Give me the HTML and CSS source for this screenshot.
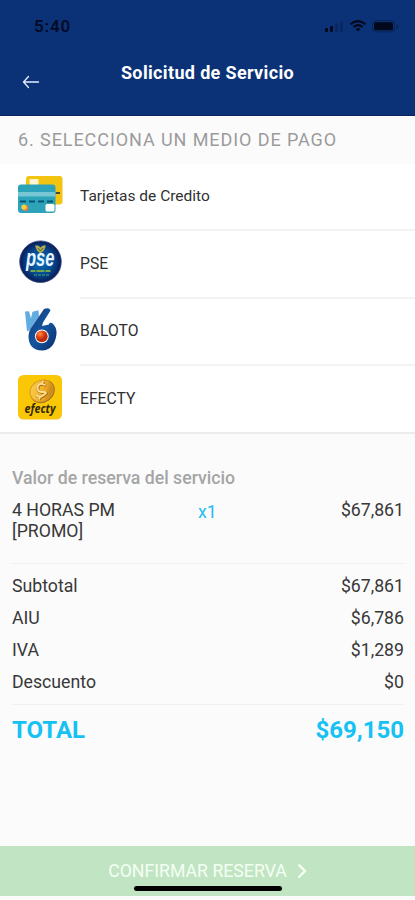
FILE: index.html
```html
<!DOCTYPE html>
<html lang="es">
<head>
<meta charset="utf-8">
<meta name="viewport" content="width=device-width, initial-scale=1">
<title>Solicitud de Servicio</title>
<link rel="stylesheet" href="styles.css">
</head>
<body>
<main class="screen">
  <header class="header">
    <div class="status">
      <span class="clock">5:40</span>
      <svg class="status-icons" width="76" height="16" viewBox="0 0 76 16">
        <rect x="1" y="8" width="3" height="4" rx="1"/>
        <rect x="6" y="6" width="3" height="6" rx="1"/>
        <g opacity=".22"><rect x="11" y="3" width="3" height="9" rx="1"/><rect x="16" y="1" width="3" height="11" rx="1"/></g>
        <g fill="none" stroke="#02081c" stroke-width="2"><path d="M26.500 4.200Q34 -2 41.500 4.200"/><path d="M29.300 7Q34 3.200 38.700 7"/></g>
        <path d="M31.500 9Q34 7 36.500 9L34 11.500z"/>
        <rect x="48.500" y=".8" width="22" height="11" rx="3" fill="none" stroke="#02081c" stroke-opacity=".35"/>
        <rect x="50" y="2.300" width="19" height="8" rx="1.500"/>
        <path d="M72.500 4v5q2-1 2-2.500t-2-2.500z" opacity=".35"/>
      </svg>
    </div>
    <div class="nav">
      <svg class="back" width="18" height="14" viewBox="0 0 18 14"><path d="M16.500 7H1.500M6.500 1.500L1.500 7L6.500 12.500"/></svg>
      <h1 class="title">Solicitud de Servicio</h1>
    </div>
  </header>
  <h2 class="step">6. SELECCIONA UN MEDIO DE PAGO</h2>
  <ul class="methods">
    <li class="method">
      <svg class="logo" width="46" height="46" viewBox="0 0 46 46">
        <rect x="8" y="4" width="36.500" height="28.500" rx="3" fill="#f2c311"/>
        <rect x="11.500" y="7" width="9" height="6" rx="1" fill="#fff6cf"/>
        <path d="M37 21h5" stroke="#4b4a35" stroke-width="2"/>
        <rect x="0" y="12.500" width="37.500" height="28.500" rx="3" fill="#2ca3b8"/>
        <path d="M0 20h37.500v4.500H0z" fill="#77c6d3"/>
        <path d="M2 29.500h6m3 0h6m3 0h6m3 0h6" stroke="#075575" stroke-width="2"/>
        <circle cx="7.500" cy="36" r="2.900" fill="#ed7650"/><circle cx="6" cy="35" r="2.600" fill="#f4d33a"/>
        <rect x="27.500" y="32" width="9" height="7.500" rx="1.500" fill="#fff"/>
      </svg>
      <div class="method-name n-card">Tarjetas de Credito</div>
    </li>
    <li class="method">
      <svg class="logo" width="46" height="46" viewBox="0 0 46 46">
        <defs><radialGradient id="pse"><stop offset="0" stop-color="#0870b8"/><stop offset=".6" stop-color="#064a92"/><stop offset="1" stop-color="#0a1b57"/></radialGradient></defs>
        <circle cx="22.500" cy="21.700" r="20.800" fill="url(#pse)" stroke="#39477d" stroke-width=".8"/>
        <path d="M17 5.500h3l2.500 2 2.500-2h3l-2 5-3.500 3-3.500-3z" fill="#b6aa4e"/><path d="M20 8l2.500 3L25 8" fill="none" stroke="#46672e"/>
        <text x="8" y="26" class="pse-text" textLength="28.500" lengthAdjust="spacingAndGlyphs">pse</text>
        <path d="M12.500 31h21" stroke="#73a64a" stroke-width="2" stroke-dasharray="5 1 8 1"/><path d="M16 35h15" stroke="#2c887d" stroke-width="1.500" stroke-dasharray="3 1"/>
      </svg>
      <div class="method-name">PSE</div>
    </li>
    <li class="method">
      <svg class="logo" width="46" height="46" viewBox="0 0 46 46">
        <defs><linearGradient id="six" x2="1" y2="1"><stop stop-color="#123a73"/><stop offset=".5" stop-color="#1555a0"/><stop offset="1" stop-color="#092f69"/></linearGradient><radialGradient id="ball" cx=".35" cy=".3"><stop stop-color="#ff9355"/><stop offset=".55" stop-color="#e94b14"/><stop offset="1" stop-color="#b92b0c"/></radialGradient></defs>
        <path d="M7 4.500l4-.3 2 7 1.500-6.500 6-1.500.5 6-9 14-3 1z" fill="#63ace0"/>
        <path d="M26 2q5.500-2 6.500 1.500L25 15.500l-1 3.500 7-1.500q0-2.500 3-1.500 5 4 4.500 11Q36.500 43 24 43.500 10.500 43 10.500 29q.5-6 4-10z" fill="url(#six)"/>
        <circle cx="23.800" cy="29.300" r="6.900" fill="#fff"/><circle cx="23.800" cy="29.300" r="5.900" fill="url(#ball)"/>
      </svg>
      <div class="method-name">BALOTO</div>
    </li>
    <li class="method">
      <svg class="logo" width="46" height="46" viewBox="0 0 46 46">
        <defs><linearGradient id="coin" x2="1" y2="1"><stop stop-color="#ffd75c"/><stop offset=".6" stop-color="#edaa22"/><stop offset="1" stop-color="#a56c16"/></linearGradient></defs>
        <rect x="0" y="0" width="44" height="44.500" rx="5.500" fill="#fac707"/>
        <ellipse cx="24.500" cy="16.500" rx="13" ry="11" transform="rotate(-35 24.500 16.500)" fill="#ad741c"/>
        <ellipse cx="23.500" cy="15.800" rx="12" ry="10.300" transform="rotate(-35 23.500 15.800)" fill="url(#coin)" stroke="#d99a25"/>
        <path d="M28 10.500Q21 7.500 20 12.500T25.500 17.500 23.500 22Q21 22.500 19 20.500M25.500 6.500l-1 3M22.500 22l-1 3" fill="none" stroke="#a96c15" stroke-width="3"/>
        <path d="M27.500 10Q20.500 7 19.500 12T25 17 23 21.500Q20.500 22 18.500 20M25 6l-1 3M22 21.500l-1 3" fill="none" stroke="#ffe18c" stroke-width="2"/>
        <text x="6.500" y="38" class="efecty-text" textLength="31" lengthAdjust="spacingAndGlyphs">efecty</text>
      </svg>
      <div class="method-name">EFECTY</div>
    </li>
  </ul>
  <section class="summary">
    <h3 class="caption">Valor de reserva del servicio</h3>
    <div class="item">
      <span class="item-name">4 HORAS PM<br>[PROMO]</span>
      <span class="quantity">x1</span>
      <span class="price">$67,861</span>
    </div>
    <div class="totals">
      <div class="line"><span>Subtotal</span><span class="price">$67,861</span></div>
      <div class="line"><span>AIU</span><span class="price">$6,786</span></div>
      <div class="line"><span>IVA</span><span class="price">$1,289</span></div>
      <div class="line"><span>Descuento</span><span class="price">$0</span></div>
    </div>
    <div class="grand"><span>TOTAL</span><span class="grand-price">$69,150</span></div>
  </section>
  <footer class="confirm">
    <div class="confirm-label"><span>CONFIRMAR RESERVA</span><svg width="10" height="16" viewBox="0 0 10 16"><path d="M1.500 1.500L8 8l-6.500 6.500"/></svg></div>
    <div class="home-indicator"></div>
  </footer>
</main>
</body>
</html>
```

FILE: styles.css
```css
* { box-sizing: border-box; }
body { margin: 0; background: #fff; font-family: Roboto, "Liberation Sans", sans-serif; color: #383838; }
h1, h2, h3, ul { margin: 0; padding: 0; font-weight: 400; }
.screen { width: 415px; height: 900px; display: flex; flex-direction: column; background: #fbfbfb; overflow: hidden; }
.header { height: 116px; flex: none; background: #0b3277; border-bottom: 1px solid #08265f; }
.status { height: 52px; display: flex; justify-content: space-between; padding: 16px 15px 0 34px; }
.clock { font-size: 17px; line-height: 20px; font-weight: 600; letter-spacing: .8px; color: #020b26; }
.status-icons { margin: 4px 0 0; fill: #02081c; }
.nav { display: grid; grid-template-columns: 100px 1fr 100px; }
.back { margin: 23px 0 0 22px; fill: none; stroke: #e8edff; stroke-width: 1.3; stroke-linecap: round; stroke-linejoin: round; }
.title { font-size: 18px; line-height: 22px; margin-top: 10px; font-weight: 700; letter-spacing: .35px; color: #fff; text-align: center; white-space: nowrap; }
.step { height: 48px; flex: none; padding-left: 18px; font-size: 18px; line-height: 47px; letter-spacing: .92px; color: #9b9b9b; white-space: nowrap; }
.methods { flex: none; height: 270px; background: #fff; border-bottom: 2px solid #ececec; list-style: none; }
.method { display: flex; height: 67.5px; }
.logo { flex: none; width: 46px; height: 46px; margin: 8px 16px 0 18px; overflow: visible; }
.method-name { flex: 1; height: 67px; line-height: 64px; font-size: 15.7px; color: #303030; border-bottom: 2px solid #f3f3f3; }
.n-card { font-size: 15.5px; }
.method:last-child .method-name { border: 0; }
.pse-text { font: italic 700 23px "Liberation Sans", sans-serif; fill: #e7f5ff; }
.efecty-text { font: italic 700 12px "Open Sans", sans-serif; fill: #302700; }
.summary { flex: 1; padding: 33px 11px 0 12px; }
.caption { font-size: 17.7px; line-height: 22px; font-weight: 500; color: #a5a5a5; }
.item { display: grid; grid-template-columns: 186px 1fr 80px; height: 65px; margin-top: 10px; padding-top: 1px; font-size: 17.7px; line-height: 21px; border-bottom: 1px solid #f0f0f0; }
.quantity { color: #22bdf2; padding-top: 2px; }
.price { text-align: right; }
.totals { padding-top: 6px; height: 141px; border-bottom: 1px solid #f0f0f0; font-size: 17.7px; }
.line { display: flex; justify-content: space-between; height: 32px; line-height: 33px; }
.grand { display: flex; justify-content: space-between; padding-top: 10px; font-size: 24px; line-height: 30px; font-weight: 700; color: #16c1f3; }
.confirm { height: 50px; margin-bottom: 4px; flex: none; display: flex; flex-direction: column; align-items: center; background: #c1e5c2; }
.confirm-label { display: flex; align-items: center; gap: 10px; margin-top: 14px; height: 22px; font-size: 17.7px; color: #f4fff4; }
.confirm-label svg { fill: none; stroke: #f8fff8; stroke-width: 2.2; }
.home-indicator { width: 148px; height: 5px; margin-top: 4px; border-radius: 3px; background: #000; }
```
